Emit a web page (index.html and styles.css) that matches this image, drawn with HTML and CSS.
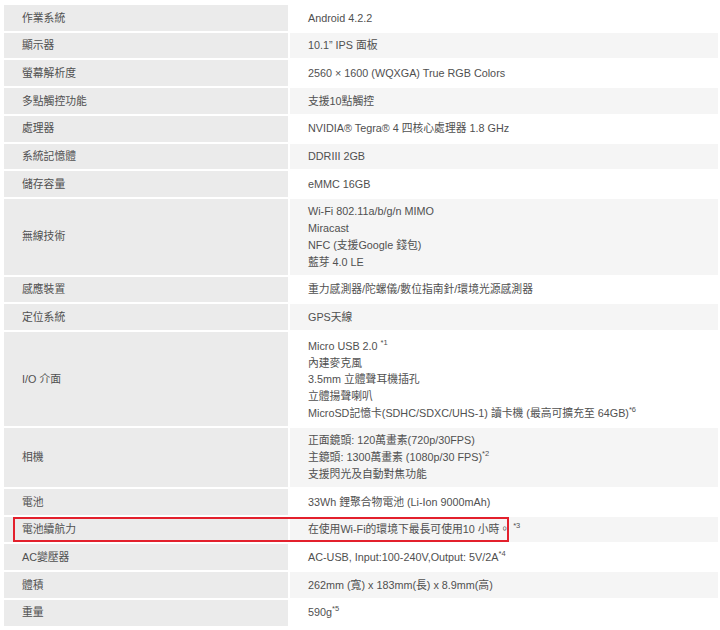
FILE: index.html
```html
<!DOCTYPE html>
<html lang="zh-Hant">
<head>
    <meta charset="UTF-8">
    <meta name="viewport" content="width=device-width, initial-scale=1.0">
    <title>規格</title>
    <link rel="stylesheet" href="styles.css">
</head>
<body>
    <table class="spec-table">
        <tr><td class="spec-name">作業系統</td><td class="spec-value">Android 4.2.2</td></tr>
        <tr><td class="spec-name">顯示器</td><td class="spec-value">10.1” IPS 面板</td></tr>
        <tr><td class="spec-name">螢幕解析度</td><td class="spec-value">2560 × 1600 (WQXGA) True RGB Colors</td></tr>
        <tr><td class="spec-name">多點觸控功能</td><td class="spec-value">支援10點觸控</td></tr>
        <tr><td class="spec-name">處理器</td><td class="spec-value">NVIDIA® Tegra® 4 四核心處理器 1.8 GHz</td></tr>
        <tr><td class="spec-name">系統記憶體</td><td class="spec-value">DDRIII 2GB</td></tr>
        <tr><td class="spec-name">儲存容量</td><td class="spec-value">eMMC 16GB</td></tr>
        <tr>
            <td class="spec-name">無線技術</td>
            <td class="spec-value">Wi-Fi 802.11a/b/g/n MIMO<br>Miracast<br>NFC (支援Google 錢包)<br>藍芽 4.0 LE</td>
        </tr>
        <tr><td class="spec-name">感應裝置</td><td class="spec-value">重力感測器/陀螺儀/數位指南針/環境光源感測器</td></tr>
        <tr><td class="spec-name">定位系統</td><td class="spec-value">GPS天線</td></tr>
        <tr>
            <td class="spec-name">I/O 介面</td>
            <td class="spec-value io">Micro USB 2.0 <sup>*1</sup><br>內建麥克風<br>3.5mm 立體聲耳機插孔<br>立體揚聲喇叭<br>MicroSD記憶卡(SDHC/SDXC/UHS-1) 讀卡機 (最高可擴充至 64GB)<sup>*6</sup></td>
        </tr>
        <tr>
            <td class="spec-name">相機</td>
            <td class="spec-value">正面鏡頭: 120萬畫素(720p/30FPS)<br>主鏡頭: 1300萬畫素 (1080p/30 FPS)<sup>*2</sup><br>支援閃光及自動對焦功能</td>
        </tr>
        <tr><td class="spec-name">電池</td><td class="spec-value">33Wh 鋰聚合物電池 (Li-Ion 9000mAh)</td></tr>
        <tr>
            <td class="spec-name">電池續航力<span class="highlight"></span></td>
            <td class="spec-value">在使用Wi-Fi的環境下最長可使用10 小時。 <sup>*3</sup></td>
        </tr>
        <tr><td class="spec-name">AC變壓器</td><td class="spec-value">AC-USB, Input:100-240V,Output: 5V/2A<sup>*4</sup></td></tr>
        <tr><td class="spec-name">體積</td><td class="spec-value">262mm (寬) x 183mm(長) x 8.9mm(高)</td></tr>
        <tr><td class="spec-name">重量</td><td class="spec-value">590g<sup>*5</sup></td></tr>
    </table>
</body>
</html>
```

FILE: styles.css
```css
body {
    margin: 0;
    background: #fff;
    font-family: "Liberation Sans", "Noto Sans CJK TC", sans-serif;
    font-size: 10.8px;
    color: #505050;
}
.spec-table {
    margin: 3px 0 0 2px;
    width: 718px;
    border-collapse: separate;
    border-spacing: 2px;
    table-layout: fixed;
}
.spec-table td {
    padding: 4.5px 10px 4.5px 18px;
    line-height: 16.7px;
    vertical-align: middle;
}
.spec-table td.io {
    padding-top: 5.8px;
}
.spec-name {
    width: 256px;
    background-color: #ebebeb;
    position: relative;
}
.spec-value {
    background-color: #fff;
}
.spec-table tr:nth-child(even) .spec-value {
    background-color: #f5f5f5;
}
sup {
    font-size: 7.5px;
    line-height: 10px;
    vertical-align: 5px;
}
.highlight {
    position: absolute;
    left: 9px;
    top: 0;
    bottom: 0;
    width: 496px;
    border: 2px solid #e3202c;
    box-sizing: border-box;
}
```
